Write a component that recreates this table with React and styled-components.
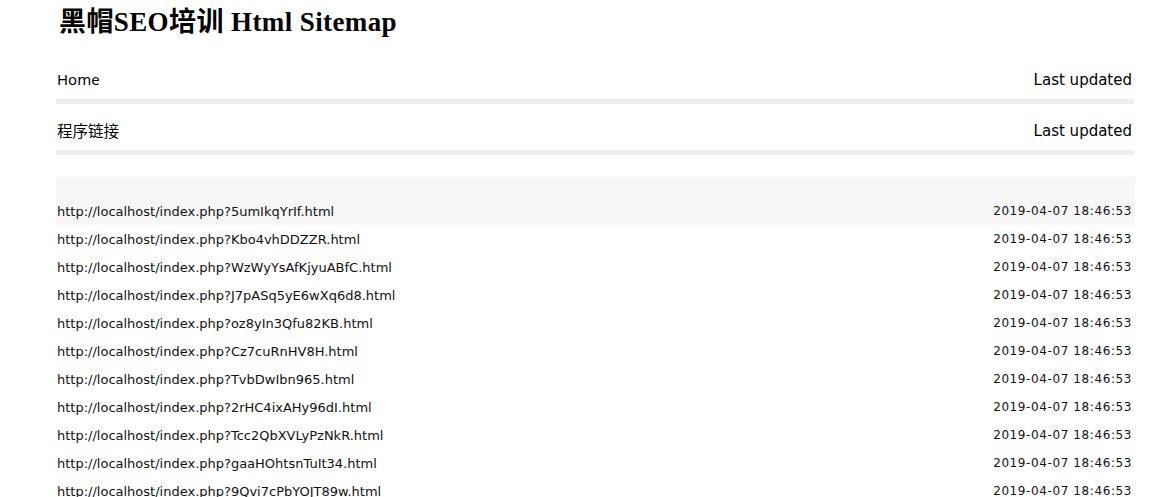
import styled, { createGlobalStyle } from "styled-components";

const GlobalStyle = createGlobalStyle`
    body {
        margin: 0;
        background: #fff;
        color: #000;
    }
`

const Page = styled.div`
    width: 1078px;
    margin-left: 56px;
`

const Title = styled.h1`
    margin: 0;
    padding: 6px 0 0 3px;
    height: 53px;
    box-sizing: border-box;
    font-family: "Liberation Serif", "Noto Sans CJK SC", serif;
    font-size: 27px;
    font-weight: 700;
    letter-spacing: 0.4px;
    line-height: 32px;
    color: #000;
`

const NavRow = styled.div`
    display: flex;
    justify-content: space-between;
    align-items: center;
    height: 40px;
    padding-top: 6px;
    border-bottom: 5px solid #eeeeee;
`

const NavLabel = styled.span`
    padding-left: 1px;
    font-family: ${(p) => (p.$cjk ? `"Noto Sans CJK SC", sans-serif` : `"Noto Sans", sans-serif`)};
    font-size: ${(p) => (p.$cjk ? "15.5px" : "15px")};
`

const NavDate = styled.span`
    padding-right: 2px;
    padding-top: 2px;
    font-family: "DejaVu Sans", sans-serif;
    font-size: 15px;
`

const Table = styled.table`
    width: 1079px;
    margin-top: 22px;
    border-collapse: collapse;
    font-family: "DejaVu Sans", sans-serif;
    color: #111;
`

const HeadRow = styled.tr`
    height: 20px;
    background: #f7f7f7;

    th {
        padding: 0;
    }
`

const Row = styled.tr`
    height: 28px;
    background: ${(p) => (p.$shaded ? "#f7f7f7" : "transparent")};
`

const Cell = styled.td`
    padding: 0 0 0 1px;
    text-align: ${(p) => (p.$right ? "right" : "left")};
    padding-right: ${(p) => (p.$right ? "3px" : "0")};
    font-size: ${(p) => (p.$right ? "12px" : "13px")};
    letter-spacing: ${(p) => (p.$right ? "0.6px" : "0")};
    white-space: nowrap;
`

const links = [
    "5umIkqYrIf",
    "Kbo4vhDDZZR",
    "WzWyYsAfKjyuABfC",
    "J7pASq5yE6wXq6d8",
    "oz8yIn3Qfu82KB",
    "Cz7cuRnHV8H",
    "TvbDwIbn965",
    "2rHC4ixAHy96dI",
    "Tcc2QbXVLyPzNkR",
    "gaaHOhtsnTuIt34",
    "9Qvi7cPbYOJT89w",
    "Xk3pLmR8sQ2",
];

export default function App() {
    return (
        <>
            <GlobalStyle />
            <Page>
                <Title>黑帽SEO培训 Html Sitemap</Title>
                <NavRow>
                    <NavLabel>Home</NavLabel>
                    <NavDate>Last updated</NavDate>
                </NavRow>
                <NavRow>
                    <NavLabel $cjk>程序链接</NavLabel>
                    <NavDate>Last updated</NavDate>
                </NavRow>
                <Table>
                    <thead>
                        <HeadRow>
                            <th></th>
                            <th></th>
                        </HeadRow>
                    </thead>
                    <tbody>
                        {links.map((id, i) => (
                            <Row key={id} $shaded={i === 0}>
                                <Cell>http://localhost/index.php?{id}.html</Cell>
                                <Cell $right>2019-04-07 18:46:53</Cell>
                            </Row>
                        ))}
                    </tbody>
                </Table>
            </Page>
        </>
    );
}
